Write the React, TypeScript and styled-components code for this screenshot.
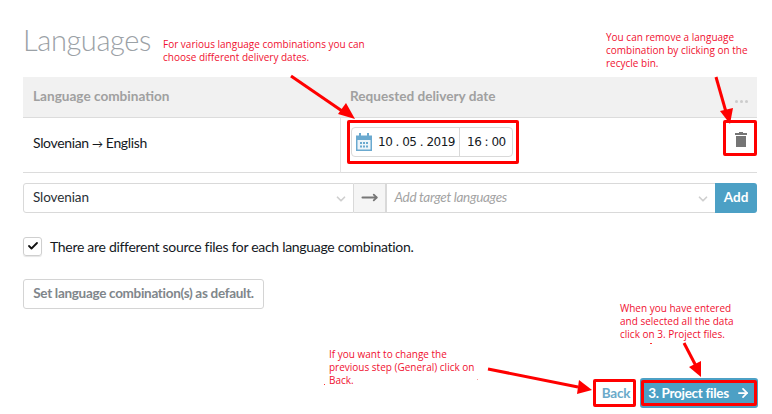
import styled, { createGlobalStyle } from "styled-components";
import { Check, ChevronDown, ArrowRight, MoveRight } from "lucide-react";

const GlobalStyle = createGlobalStyle`
  html, body {
    margin: 0;
    padding: 0;
    background: #fff;
  }
  body {
    font-family: "Lato", sans-serif;
    color: #1d2329;
  }
`;

const notes = [
  { x: 163, y: 38, lines: ["For various language combinations you can", "choose different delivery dates."] },
  { x: 606, y: 31, lines: ["You can remove a language", "combination by clicking on the", "recycle bin."] },
  { x: 620, y: 302, lines: ["When you have entered", "and selected all the data", "click on 3. Project files."] },
  { x: 329, y: 348, lines: ["If you want to change the", "previous step (General) click on", "Back."] },
];

const boxes = [
  { x: 347, y: 120, w: 172, h: 44 },
  { x: 723, y: 120, w: 34, h: 36 },
  { x: 593, y: 379, w: 43, h: 28 },
  { x: 641, y: 380, w: 116, h: 26 },
];

const arrows = [
  { x1: 291, y1: 76, x2: 345, y2: 113, tip: "355,119 338,114 346,103" },
  { x1: 716, y1: 77, x2: 726, y2: 112, tip: "730,124 720,111 733,108" },
  { x1: 684, y1: 343, x2: 696, y2: 366, tip: "701,377 689,367 701,361" },
  { x1: 488, y1: 369, x2: 578, y2: 387, tip: "592,390 577,394 579,380" },
];

export default function App() {
  return (
    <Page>
      <GlobalStyle />
      <Title>Languages</Title>

      <Table>
        <HeadCell>Language combination</HeadCell>
        <HeadCell>
          Requested delivery date
          <MoreDots>
            <i />
            <i />
            <i />
          </MoreDots>
        </HeadCell>
        <BodyCell>
          <span>
            Slovenian <SmallArrow>→</SmallArrow> English
          </span>
        </BodyCell>
        <BodyCell $divided>
          <DateField>
            <DatePart>
              <CalendarIcon />
              <span>10 . 05 . 2019</span>
            </DatePart>
            <TimePart>16 : 00</TimePart>
          </DateField>
          <TrashButton>
            <TrashIcon />
          </TrashButton>
        </BodyCell>
      </Table>

      <LanguageBar>
        <SelectBox $width={331}>
          Slovenian
          <ChevronDown size={14} strokeWidth={3} color="#cfcfcf" />
        </SelectBox>
        <ArrowCell>
          <MoveRight size={17} strokeWidth={2.6} color="#777" />
        </ArrowCell>
        <SelectBox $width={330} $placeholder>
          Add target languages
          <ChevronDown size={14} strokeWidth={3} color="#cfcfcf" />
        </SelectBox>
        <AddButton>Add</AddButton>
      </LanguageBar>

      <CheckRow>
        <CheckBox>
          <Check size={12} strokeWidth={3.6} color="#111" />
        </CheckBox>
        There are different source files for each language combination.
      </CheckRow>

      <DefaultButton>Set language combination(s) as default.</DefaultButton>

      <Footer>
        <BackButton>Back</BackButton>
        <NextButton>
          3. Project files
          <ArrowRight size={14} strokeWidth={3} color="#fff" />
        </NextButton>
      </Footer>

      {notes.map((n) => (
        <Note key={n.x} $x={n.x} $y={n.y}>
          {n.lines.map((l) => (
            <div key={l}>{l}</div>
          ))}
        </Note>
      ))}
      {boxes.map((b) => (
        <RedBox key={b.x} $x={b.x} $y={b.y} $w={b.w} $h={b.h} />
      ))}
      <ArrowLayer width="772" height="414" viewBox="0 0 772 414">
        {arrows.map((a) => (
          <g key={a.x1}>
            <line x1={a.x1} y1={a.y1} x2={a.x2} y2={a.y2} stroke="#f00" strokeWidth="3" />
            <polygon points={a.tip} fill="#f00" />
          </g>
        ))}
        <rect x="324" y="384" width="1" height="1" fill="#f33" />
        <rect x="477" y="379" width="1" height="1" fill="#f99" />
        <rect x="650" y="343" width="2" height="1" fill="#f33" />
      </ArrowLayer>
    </Page>
  );
}

const CalendarIcon = () => (
  <svg width="16" height="18" viewBox="0 0 16 18">
    <path d="M0 2.5h16V18H0z" fill="#6aa9cf" />
    <path d="M1.5 7h13v9.5h-13z" fill="#eef5fa" />
    <path d="M3 0h2v4H3zM11 0h2v4h-2z" fill="#6aa9cf" />
    <path
      d="M4 9h2v2H4zM7 9h2v2H7zM10 9h2v2h-2zM4 12.5h2v2H4zM7 12.5h2v2H7zM10 12.5h2v2h-2z"
      fill="#6aa9cf"
    />
  </svg>
);

const TrashIcon = () => (
  <svg width="12" height="15" viewBox="0 0 12 15">
    <path d="M4 0h4v1h4v2H0V1h4z" fill="#757575" />
    <path d="M1 4h10v11H1z" fill="#757575" />
  </svg>
);

const Page = styled.div`
  position: relative;
  width: 772px;
  height: 414px;
  padding: 0 15px 0 23px;
  box-sizing: border-box;
  overflow: hidden;
`;

const Title = styled.h1`
  margin: 0;
  height: 77px;
  padding-top: 19px;
  box-sizing: border-box;
  font-size: 29px;
  line-height: 42px;
  font-weight: 300;
  letter-spacing: -0.4px;
  color: #9ba1a6;
`;

const Table = styled.div`
  display: grid;
  grid-template-columns: 317px 1fr;
  grid-template-rows: 41px 55px;
`;

const HeadCell = styled.div`
  position: relative;
  display: flex;
  align-items: center;
  padding: 0 0 2px 10px;
  background: #f1f1f1;
  border-bottom: 1px solid #dcdcdc;
  font-size: 13.6px;
  font-weight: 700;
  color: #a0a0a0;
`;

const MoreDots = styled.span`
  position: absolute;
  right: 9px;
  top: 23px;
  display: flex;
  gap: 2px;

  i {
    width: 3px;
    height: 3px;
    background: #ccc;
    border-radius: 50%;
  }
`;

const BodyCell = styled.div<{ $divided?: boolean }>`
  display: flex;
  align-items: center;
  justify-content: space-between;
  padding: 0 0 6px 10px;
  border-bottom: 1px solid #dcdcdc;
  border-left: ${(p) => (p.$divided ? "1px solid #e4e4e4" : "none")};
  font-size: 14px;
  letter-spacing: -0.35px;
  color: #14191e;
`;

const SmallArrow = styled.span`
  font-size: 11px;
`;

const DateField = styled.div`
  display: flex;
  height: 30px;
  box-sizing: border-box;
  border: 1px solid #d9d9d9;
  border-radius: 4px;
  font-family: "DejaVu Sans", sans-serif;
  font-size: 12px;
  letter-spacing: -0.5px;
  color: #14191e;
`;

const DatePart = styled.div`
  display: flex;
  align-items: center;
  gap: 6px;
  width: 108px;
  padding-left: 4px;
  box-sizing: border-box;
  border-right: 1px solid #d9d9d9;
  white-space: nowrap;
`;

const TimePart = styled.div`
  display: flex;
  align-items: center;
  width: 52px;
  padding-left: 7px;
  box-sizing: border-box;
  white-space: nowrap;
`;

const TrashButton = styled.div`
  display: flex;
  margin: 0 10px 6px 0;
`;

const LanguageBar = styled.div`
  display: flex;
  height: 30px;
  margin-top: 10px;
`;

const SelectBox = styled.div<{ $width: number; $placeholder?: boolean }>`
  width: ${(p) => p.$width}px;
  box-sizing: border-box;
  display: flex;
  align-items: center;
  justify-content: space-between;
  padding: 0 5px 3px ${(p) => (p.$placeholder ? 8 : 9)}px;
  border: 1px solid #d9d9d9;
  border-radius: ${(p) => (p.$placeholder ? "0" : "3px 0 0 3px")};
  border-right: ${(p) => (p.$placeholder ? "none" : "1px solid #d9d9d9")};
  font-size: 13.5px;
  letter-spacing: ${(p) => (p.$placeholder ? "-0.3px" : "-0.1px")};
  font-style: ${(p) => (p.$placeholder ? "italic" : "normal")};
  color: ${(p) => (p.$placeholder ? "#a3a3a3" : "#2a3036")};

  svg {
    margin-top: 4px;
  }
`;

const ArrowCell = styled.div`
  width: 32px;
  box-sizing: border-box;
  display: flex;
  align-items: center;
  justify-content: center;
  padding-bottom: 2px;
  background: #f5f5f5;
  border: 1px solid #d9d9d9;
  border-left: none;
`;

const AddButton = styled.button`
  width: 42px;
  padding: 0 0 3px;
  border: none;
  border-radius: 0 3px 3px 0;
  background: #4ca0c5;
  color: #fff;
  font-family: "Lato", sans-serif;
  font-size: 13.5px;
  font-weight: 700;
`;

const CheckRow = styled.label`
  display: flex;
  align-items: center;
  gap: 8px;
  height: 20px;
  margin-top: 23px;
  font-size: 14px;
  letter-spacing: -0.3px;
  color: #14191e;
`;

const CheckBox = styled.span`
  width: 19px;
  height: 19px;
  box-sizing: border-box;
  display: flex;
  align-items: center;
  justify-content: center;
  border: 1px solid #cfcfcf;
  border-radius: 3px;
  box-shadow: 0 1px 1px rgba(0, 0, 0, 0.1);
`;

const DefaultButton = styled.button`
  display: block;
  width: 241px;
  height: 30px;
  margin-top: 23px;
  padding: 0 0 2px;
  background: #fff;
  border: 1px solid #d4d4d4;
  border-radius: 3px;
  font-family: "Lato", sans-serif;
  font-size: 13.5px;
  font-weight: 700;
  letter-spacing: -0.3px;
  white-space: nowrap;
  color: #80868b;
`;

const Footer = styled.div`
  display: flex;
  justify-content: flex-end;
  gap: 5px;
  margin-top: 69px;
`;

const BackButton = styled.button`
  width: 42px;
  height: 30px;
  padding: 0 0 0 4px;
  border: none;
  background: #fff;
  color: #6aa9c9;
  font-family: "Lato", sans-serif;
  font-size: 13.5px;
  font-weight: 700;
  letter-spacing: -0.2px;
`;

const NextButton = styled.button`
  width: 118px;
  height: 30px;
  margin-right: -1px;
  padding: 0;
  display: flex;
  align-items: center;
  justify-content: center;
  gap: 7px;
  border: none;
  border-radius: 3px;
  background: #4ca0c5;
  color: #fff;
  font-family: "Lato", sans-serif;
  font-size: 13.5px;
  font-weight: 700;
  letter-spacing: -0.3px;
  white-space: nowrap;
`;

const Note = styled.div<{ $x: number; $y: number }>`
  position: absolute;
  left: ${(p) => p.$x}px;
  top: ${(p) => p.$y}px;
  font-family: "Open Sans", sans-serif;
  font-size: 10px;
  line-height: 13px;
  color: #f01030;
  white-space: nowrap;
`;

const RedBox = styled.div<{ $x: number; $y: number; $w: number; $h: number }>`
  position: absolute;
  left: ${(p) => p.$x}px;
  top: ${(p) => p.$y}px;
  width: ${(p) => p.$w}px;
  height: ${(p) => p.$h}px;
  box-sizing: border-box;
  border: 3px solid #f00;
  border-radius: 2px;
`;

const ArrowLayer = styled.svg`
  position: absolute;
  left: 0;
  top: 0;
  pointer-events: none;
`;
